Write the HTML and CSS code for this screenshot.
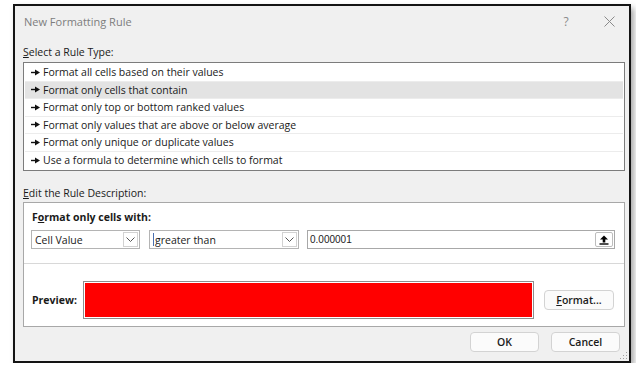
FILE: index.html
```html
<!DOCTYPE html>
<html lang="en">
<head>
    <meta charset="UTF-8">
    <title>New Formatting Rule</title>
    <link rel="stylesheet" href="styles.css">
</head>
<body>
    <div class="dialog">
        <div class="titlebar">
            <span class="title">New Formatting Rule</span>
            <span class="help">?</span>
            <span class="close">
                <svg width="11" height="11" viewBox="0 0 11 11"><path d="M0.5 0.5L10.5 10.5M10.5 0.5L0.5 10.5" stroke="#8a8a8a" stroke-width="1"/></svg>
            </span>
        </div>

        <div class="content">
            <div class="label"><u>S</u>elect a Rule Type:</div>
            <ul class="rule-list">
                <li><svg class="arrow" width="9" height="7" viewBox="0 0 9 7"><path d="M0 3.5H5" stroke="#111" stroke-width="1.4"/><path d="M4 0.5L9 3.5L4 6.5Z" fill="#111"/></svg>Format all cells based on their values</li>
                <li class="selected"><svg class="arrow" width="9" height="7" viewBox="0 0 9 7"><path d="M0 3.5H5" stroke="#111" stroke-width="1.4"/><path d="M4 0.5L9 3.5L4 6.5Z" fill="#111"/></svg>Format only cells that contain</li>
                <li><svg class="arrow" width="9" height="7" viewBox="0 0 9 7"><path d="M0 3.5H5" stroke="#111" stroke-width="1.4"/><path d="M4 0.5L9 3.5L4 6.5Z" fill="#111"/></svg>Format only top or bottom ranked values</li>
                <li><svg class="arrow" width="9" height="7" viewBox="0 0 9 7"><path d="M0 3.5H5" stroke="#111" stroke-width="1.4"/><path d="M4 0.5L9 3.5L4 6.5Z" fill="#111"/></svg>Format only values that are above or below average</li>
                <li><svg class="arrow" width="9" height="7" viewBox="0 0 9 7"><path d="M0 3.5H5" stroke="#111" stroke-width="1.4"/><path d="M4 0.5L9 3.5L4 6.5Z" fill="#111"/></svg>Format only unique or duplicate values</li>
                <li><svg class="arrow" width="9" height="7" viewBox="0 0 9 7"><path d="M0 3.5H5" stroke="#111" stroke-width="1.4"/><path d="M4 0.5L9 3.5L4 6.5Z" fill="#111"/></svg>Use a formula to determine which cells to format</li>
            </ul>

            <div class="label label-edit"><u>E</u>dit the Rule Description:</div>
            <div class="panel">
                <div class="panel-top">
                    <div class="panel-head">F<u>o</u>rmat only cells with:</div>
                    <div class="criteria">
                        <div class="combo combo-field">
                            <span class="combo-text">Cell Value</span>
                            <span class="drop"><svg width="9" height="5" viewBox="0 0 9 5"><path d="M0.5 0.5L4.5 4.5L8.5 0.5" fill="none" stroke="#555" stroke-width="1"/></svg></span>
                        </div>
                        <div class="combo combo-op">
                            <span class="combo-text"><i class="caret"></i>greater than</span>
                            <span class="drop"><svg width="9" height="5" viewBox="0 0 9 5"><path d="M0.5 0.5L4.5 4.5L8.5 0.5" fill="none" stroke="#555" stroke-width="1"/></svg></span>
                        </div>
                        <div class="value-box">
                            <span class="value-text">0.000001</span>
                            <span class="ref-btn">
                                <svg width="10" height="10" viewBox="0 0 10 10"><path d="M5 0.5L9 4.5H6.3V7.5H3.7V4.5H1Z" fill="#000"/><path d="M0.5 9H9.5" stroke="#000" stroke-width="1.4"/></svg>
                            </span>
                        </div>
                    </div>
                </div>
                <div class="preview-row">
                    <span class="preview-label">Preview:</span>
                    <div class="swatch"></div>
                    <button class="btn btn-format"><u>F</u>ormat...</button>
                </div>
            </div>

            <div class="actions">
                <button class="btn">OK</button>
                <button class="btn">Cancel</button>
            </div>
        </div>

        <svg class="grip" width="8" height="8" viewBox="0 0 8 8">
            <rect x="6" y="0" width="1" height="1" fill="#a0a0a0"/>
            <rect x="3" y="3" width="1" height="1" fill="#a0a0a0"/>
            <rect x="6" y="3" width="1" height="1" fill="#a0a0a0"/>
            <rect x="0" y="6" width="1" height="1" fill="#a0a0a0"/>
            <rect x="3" y="6" width="1" height="1" fill="#a0a0a0"/>
            <rect x="6" y="6" width="1" height="1" fill="#a0a0a0"/>
        </svg>
    </div>
</body>
</html>
```

FILE: styles.css
```css
body {
    margin: 0;
    background: #ffffff;
    font-family: 'Open Sans', 'Noto Sans', sans-serif;
    font-size: 10.5px;
    color: #1a1a1a;
}
.dialog {
    position: relative;
    margin: 4px 0 0 13px;
    width: 618px;
    height: 359px;
    box-sizing: border-box;
    border: 2px solid #141414;
    background: #f0f0f0;
    box-shadow: 3px 4px 6px rgba(0, 0, 0, 0.35);
}
.titlebar {
    display: flex;
    align-items: center;
    height: 30px;
    padding-left: 9px;
}
.title {
    font-size: 11px;
    color: #7d7d7d;
}
.help {
    margin-left: auto;
    width: 20px;
    text-align: center;
    font-size: 12px;
    color: #8a8a8a;
}
.close {
    display: flex;
    justify-content: center;
    width: 20px;
    margin: 0 10px 0 23px;
}
.content {
    padding: 0 4px 0 8px;
}
.label {
    height: 14px;
    line-height: 14px;
    margin-top: 9px;
}
.label-edit {
    margin-top: 15px;
}
.rule-list {
    list-style: none;
    margin: 3px 0 0 0;
    padding: 1px;
    height: 109px;
    box-sizing: border-box;
    border: 1px solid #7c7c7c;
    background: #ffffff;
}
.rule-list li {
    display: flex;
    align-items: center;
    height: 17.5px;
    box-sizing: border-box;
    padding-left: 6px;
    border-bottom: 1px solid #ececec;
}
.rule-list li:last-child {
    border-bottom: none;
}
.rule-list li.selected {
    background: #e3e3e3;
}
.arrow {
    margin-right: 3px;
}
.panel {
    margin-top: 2px;
    height: 125px;
    box-sizing: border-box;
    border: 1px solid #a8a8a8;
    background: #ffffff;
}
.panel-top {
    padding: 7px 8px 0 7px;
    height: 61px;
    box-sizing: border-box;
    border-bottom: 1px solid #d8d8d8;
}
.panel-head {
    height: 14px;
    line-height: 14px;
    padding-left: 1px;
    font-weight: bold;
}
.criteria {
    display: flex;
    margin-top: 6px;
    height: 19px;
}
.combo {
    display: flex;
    align-items: center;
    box-sizing: border-box;
    border: 1px solid #b4b4b4;
    background: #ffffff;
    padding: 0 1px 0 3px;
}
.combo-field {
    width: 109px;
}
.combo-op {
    width: 150px;
    margin-left: 9px;
}
.combo-text {
    flex: 1;
    display: flex;
    align-items: center;
}
.caret {
    width: 1px;
    height: 13px;
    margin-right: 1px;
    background: #4a6fb0;
}
.drop {
    display: flex;
    align-items: center;
    justify-content: center;
    width: 15px;
    height: 15px;
    box-sizing: border-box;
    border: 1px solid #d2d2d2;
}
.value-box {
    display: flex;
    align-items: center;
    width: 308px;
    margin-left: 8px;
    box-sizing: border-box;
    border: 1px solid #a8a8a8;
    padding: 0 1px 0 2px;
}
.value-text {
    flex: 1;
    font-family: 'Liberation Sans', Arial, sans-serif;
    font-size: 10px;
    color: #222;
}
.ref-btn {
    display: flex;
    align-items: center;
    justify-content: center;
    width: 18px;
    height: 15px;
    box-sizing: border-box;
    border: 1px solid #bdbdbd;
    border-radius: 2px;
}
.preview-row {
    display: flex;
    align-items: center;
    padding: 17px 9px 0 8px;
}
.preview-label {
    width: 51px;
    font-weight: bold;
}
.swatch {
    width: 451px;
    height: 38px;
    box-sizing: border-box;
    border: 1px solid #8e8e8e;
    background: #ff0000;
    box-shadow: inset 0 0 0 1px #ffffff;
}
.btn {
    height: 20px;
    box-sizing: border-box;
    border: 1px solid #d3d3d3;
    border-radius: 4px;
    background: #fbfbfb;
    font-family: inherit;
    font-size: 10.5px;
    font-weight: 600;
    color: #1a1a1a;
    padding: 0;
}
.btn-format {
    width: 70px;
    margin-left: 10px;
}
.actions {
    display: flex;
    justify-content: flex-end;
    gap: 12px;
    margin: 5px 5px 0 0;
}
.actions .btn {
    width: 69px;
}
.grip {
    position: absolute;
    right: 1px;
    bottom: 1px;
}
```
